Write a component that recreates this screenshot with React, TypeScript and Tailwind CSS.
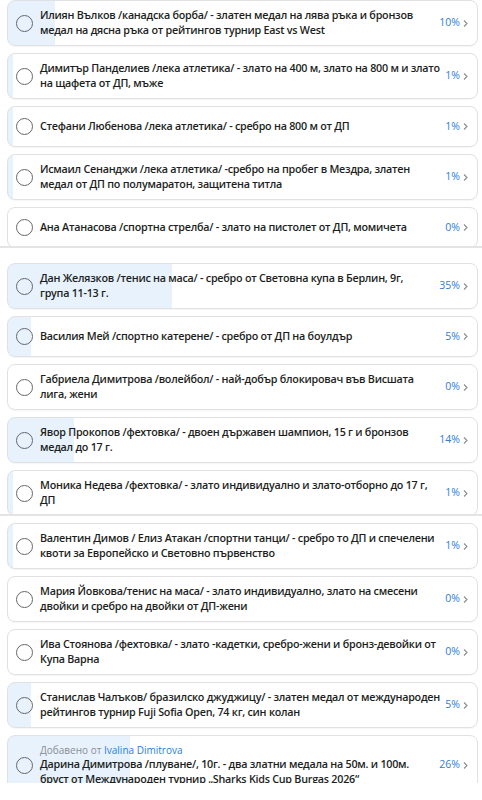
type Option = {
  text: string;
  pct: number;
  addedBy?: string;
};

// line breaks follow the original poll layout
const groups: { height: string; options: Option[] }[] = [
  {
    height: "h-[246px]",
    options: [
      {
        text: "Илиян Вълков /канадска борба/ - златен медал на лява ръка и бронзов\nмедал на дясна ръка от рейтингов турнир East vs West",
        pct: 10,
      },
      {
        text: "Димитър Панделиев /лека атлетика/ - злато на 400 м, злато на 800 м и злато\nна щафета от ДП, мъже",
        pct: 1,
      },
      { text: "Стефани Любенова /лека атлетика/ - сребро на 800 м от ДП", pct: 1 },
      {
        text: "Исмаил Сенанджи /лека атлетика/ -сребро на пробег в Мездра, златен\nмедал от ДП по полумаратон, защитена титла",
        pct: 1,
      },
      { text: "Ана Атанасова /спортна стрелба/ - злато на пистолет от ДП, момичета", pct: 0 },
    ],
  },
  {
    height: "h-[251px]",
    options: [
      {
        text: "Дан Желязков /тенис на маса/ - сребро от Световна купа в Берлин, 9г,\nгрупа 11-13 г.",
        pct: 35,
      },
      { text: "Василия Мей /спортно катерене/ - сребро от ДП на боулдър", pct: 5 },
      {
        text: "Габриела Димитрова /волейбол/ - най-добър блокировач във Висшата\nлига, жени",
        pct: 0,
      },
      {
        text: "Явор Прокопов /фехтовка/ - двоен държавен шампион, 15 г и бронзов\nмедал до 17 г.",
        pct: 14,
      },
      {
        text: "Моника Недева /фехтовка/ - злато индивидуално и злато-отборно до 17 г,\nДП",
        pct: 1,
      },
    ],
  },
  {
    height: "h-[260px]",
    options: [
      {
        text: "Валентин Димов / Елиз Атакан /спортни танци/ - сребро то ДП и спечелени\nквоти за Европейско и Световно първенство",
        pct: 1,
      },
      {
        text: "Мария Йовкова/тенис на маса/ - злато индивидуално, злато на смесени\nдвойки и сребро на двойки от ДП-жени",
        pct: 0,
      },
      {
        text: "Ива Стоянова /фехтовка/ - злато -кадетки, сребро-жени и бронз-девойки от\nКупа Варна",
        pct: 0,
      },
      {
        text: "Станислав Чалъков/ бразилско джуджицу/ - златен медал от международен\nрейтингов турнир Fuji Sofia Open, 74 кг, син колан",
        pct: 5,
      },
      {
        text: "Дарина Димитрова /плуване/, 10г. - два златни медала на 50м. и 100м.\nбруст от Международен турнир „Sharks Kids Cup Burgas 2026“",
        pct: 26,
        addedBy: "Ivalina Dimitrova",
      },
    ],
  },
];

function Chevron() {
  return (
    <svg width="5" height="9" viewBox="0 0 5 9" className="shrink-0">
      <path d="M1 1.5 L4 4.5 L1 7.5" fill="none" stroke="#8a8d91" strokeWidth="1.1" />
    </svg>
  );
}

function PollOption({ option }: { option: Option }) {
  return (
    <div
      className="flex min-h-[41px] shrink-0 items-center rounded-lg border border-[#dfe1e5] py-[7px] pl-[8px] pr-[9px] shadow-[0_1px_1px_rgba(0,0,0,0.04)]"
      style={{
        background: `linear-gradient(to right, #e7f2fd ${option.pct}%, #ffffff ${option.pct}%)`,
      }}
    >
      <span className="h-[17px] w-[17px] shrink-0 rounded-full border-[1.5px] border-[#65676b]" />
      <div className="ml-[7px] flex-1">
        {option.addedBy && (
          <p className="text-[10px] leading-[14px] text-[#8a8d91]">
            Добавено от <span className="text-[#2d7ddb]">{option.addedBy}</span>
          </p>
        )}
        <p className="whitespace-pre-line text-[10.75px] font-semibold leading-[15px] tracking-[-0.25px] text-[#1c1e21]">
          {option.text}
        </p>
      </div>
      <span className="ml-[2px] shrink-0 text-[10.5px] text-[#2d7ddb]">{option.pct}%</span>
      <span className="ml-[3px]">
        <Chevron />
      </span>
    </div>
  );
}

export default function App() {
  return (
    <div className="h-[800px] w-[482px] overflow-hidden bg-white font-['Open_Sans','Noto_Sans',sans-serif]">
      {groups.map((group, gi) => (
        <div key={gi}>
          {gi > 0 && (
            <div className={gi === 1 ? "pb-[15px]" : "pb-[7px]"}>
              <div className="h-[2px] bg-[#e4e4e4]" />
            </div>
          )}
          <div className={`${group.height} overflow-hidden`}>
            <div className="ml-[7px] mr-[4px] flex flex-col gap-[7px]">
              {group.options.map((option, i) => (
                <PollOption key={i} option={option} />
              ))}
            </div>
          </div>
        </div>
      ))}
    </div>
  );
}
